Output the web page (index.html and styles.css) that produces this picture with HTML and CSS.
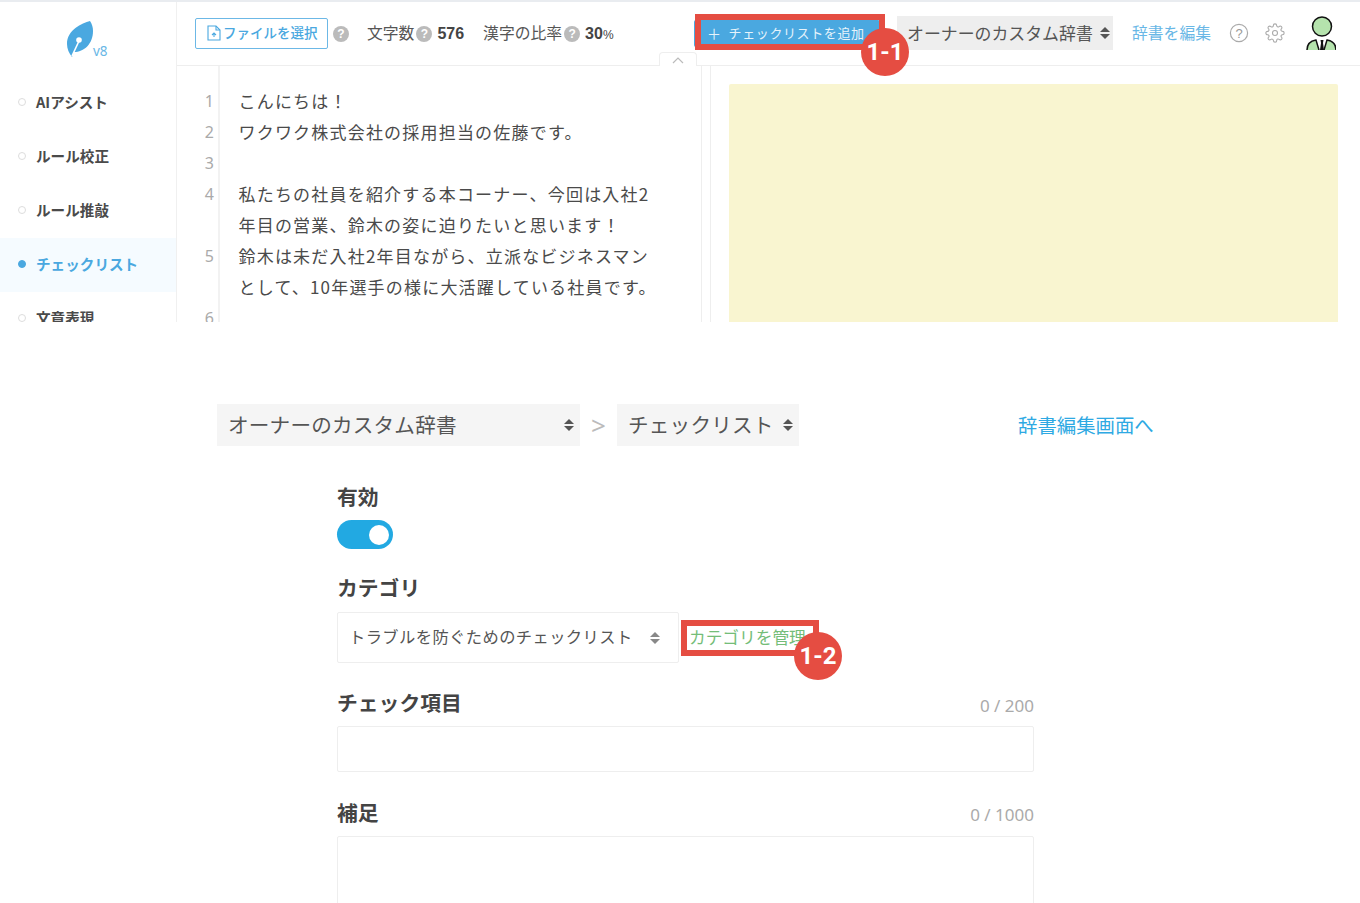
FILE: index.html
```html
<!DOCTYPE html>
<html lang="ja">
<head>
<meta charset="utf-8">
<title>チェックリスト</title>
<link rel="stylesheet" href="styles.css">
</head>
<body>
<section class="app">
  <aside class="sidebar">
    <div class="logo">
      <svg width="30" height="38" viewBox="0 0 30 38"><path d="M24 1C16 3 1 10 1 24c0 5 2 9 5 13l2-5C18 32 27 24 27 11c0-4-1-7-3-10Z" fill="#4aa8e0"/><path d="M6 36 13 21" stroke="#fff" stroke-width="1.600"/><circle cx="13" cy="20" r="2.800" fill="#fff"/></svg>
      <span class="version">v8</span>
    </div>
    <nav>
      <div class="nav-item"><i class="dot"></i>AIアシスト</div>
      <div class="nav-item"><i class="dot"></i>ルール校正</div>
      <div class="nav-item"><i class="dot"></i>ルール推敲</div>
      <div class="nav-item active"><i class="dot"></i>チェックリスト</div>
      <div class="nav-item"><i class="dot"></i>文章表現</div>
    </nav>
  </aside>
  <div class="main">
    <header class="toolbar">
      <button class="file-btn">
        <svg width="14" height="16" viewBox="0 0 14 16" fill="none" stroke="#4aa8e0" stroke-width="1.100"><path d="M1 1h8l4 4v10H1Z"/><path d="M9 1v4h4"/><path d="M7 12V8M5 10l2-2 2 2"/></svg>ファイルを選択
      </button>
      <span class="help first">?</span>
      <span class="stat-label">文字数</span><span class="help">?</span><b class="stat-num">576</b>
      <span class="stat-label second">漢字の比率</span><span class="help">?</span><b class="stat-num">30<small>%</small></b>
      <button class="add-btn"><span class="plus">＋</span>チェックリストを追加</button>
      <div class="dict-select">オーナーのカスタム辞書<span class="updown"></span></div>
      <a class="edit-link">辞書を編集</a>
      <svg class="tool-icon q" width="20" height="20" viewBox="0 0 20 20"><circle cx="10" cy="10" r="8.600" fill="none" stroke="#aaa" stroke-width="1.200"/><text x="10" y="14.600" text-anchor="middle" class="q-text">?</text></svg>
      <svg class="tool-icon gear" width="20" height="20" viewBox="0 0 24 24" fill="none" stroke="#aaa" stroke-width="1.300"><circle cx="12" cy="12" r="3"/><path d="M19.400 15a1.650 1.650 0 0 0 .33 1.820l.06.06a2 2 0 0 1 0 2.830 2 2 0 0 1-2.830 0l-.06-.06a1.650 1.650 0 0 0-1.820-.33 1.650 1.650 0 0 0-1 1.510V21a2 2 0 0 1-2 2 2 2 0 0 1-2-2v-.09A1.650 1.650 0 0 0 9 19.400a1.650 1.650 0 0 0-1.820.33l-.06.06a2 2 0 0 1-2.830 0 2 2 0 0 1 0-2.830l.06-.06a1.650 1.650 0 0 0 .33-1.820 1.650 1.650 0 0 0-1.510-1H3a2 2 0 0 1-2-2 2 2 0 0 1 2-2h.09A1.650 1.650 0 0 0 4.600 9a1.650 1.650 0 0 0-.33-1.820l-.06-.06a2 2 0 0 1 0-2.830 2 2 0 0 1 2.830 0l.06.06a1.650 1.650 0 0 0 1.820.33H9a1.650 1.650 0 0 0 1-1.510V3a2 2 0 0 1 2-2 2 2 0 0 1 2 2v.09a1.650 1.650 0 0 0 1 1.510 1.650 1.650 0 0 0 1.820-.33l.06-.06a2 2 0 0 1 2.830 0 2 2 0 0 1 0 2.830l-.06.06a1.650 1.650 0 0 0-.33 1.820V9a1.650 1.650 0 0 0 1.510 1H21a2 2 0 0 1 2 2 2 2 0 0 1-2 2h-.09a1.650 1.650 0 0 0-1.510 1z"/></svg>
      <svg class="avatar" width="30" height="34" viewBox="0 0 30 34"><circle cx="16" cy="10.500" r="9.500" fill="#b5e3ad" stroke="#111" stroke-width="1.500"/><path d="M1 34c0-6 3-9 9-10l3 10Zm29 0c0-6-3-9-9-10l-3 10Z" fill="#b5e3ad"/><path d="M1 34c0-6 3-9 9-10l3 10M30 34c0-6-3-9-9-10l-3 10" fill="none" stroke="#111" stroke-width="1.500"/><path d="M14.500 24h3l-.5 3 1 7h-4l1-7Z" fill="#111"/></svg>
      <span class="collapse-tab"><svg width="12" height="7" viewBox="0 0 12 7" fill="none" stroke="#bbb" stroke-width="1.200"><path d="M1 6l5-5 5 5"/></svg></span>
      <span class="mark mark-one"></span>
      <span class="badge badge-one">1-1</span>
    </header>
    <div class="workspace">
      <div class="editor">
        <div class="gutter">
          <div>1</div><div>2</div><div>3</div><div>4</div><div></div><div>5</div><div></div><div>6</div>
        </div>
        <div class="text">
          <p>こんにちは！</p>
          <p>ワクワク株式会社の採用担当の佐藤です。</p>
          <p>&nbsp;</p>
          <p>私たちの社員を紹介する本コーナー、今回は入社2</p>
          <p>年目の営業、鈴木の姿に迫りたいと思います！</p>
          <p>鈴木は未だ入社2年目ながら、立派なビジネスマン</p>
          <p>として、10年選手の様に大活躍している社員です。</p>
        </div>
      </div>
      <div class="results"><div class="yellow"></div></div>
    </div>
  </div>
</section>

<section class="dialog">
  <div class="crumbs">
    <div class="big-select wide">オーナーのカスタム辞書<span class="updown"></span></div>
    <span class="gt">&gt;</span>
    <div class="big-select narrow">チェックリスト<span class="updown"></span></div>
    <a class="to-editor">辞書編集画面へ</a>
  </div>
  <form class="form">
    <div class="label first-label">有効</div>
    <div class="toggle"><i></i></div>
    <div class="label cat-label">カテゴリ</div>
    <div class="cat-row">
      <div class="cat-select">トラブルを防ぐためのチェックリスト<span class="updown pale"></span></div>
      <a class="cat-link">カテゴリを管理<span class="mark mark-two"></span><span class="badge badge-two">1-2</span></a>
    </div>
    <div class="label-row item-row"><span class="label">チェック項目</span><span class="count">0 / 200</span></div>
    <div class="input"></div>
    <div class="label-row note-row"><span class="label note-label">補足</span><span class="count">0 / 1000</span></div>
    <div class="input area"></div>
  </form>
</section>
</body>
</html>
```
FILE: styles.css
```css
* { box-sizing: border-box; }
html, body { margin: 0; height: 903px; overflow: hidden; background: #fff; }
body { font-family: "Noto Sans CJK JP", "Noto Sans", sans-serif; color: #4a4a4a; }
p { margin: 0; }
a { color: #4aa8e0; }
button { font-family: inherit; }

.app { display: flex; height: 322px; overflow: hidden; border-top: 2px solid #e9ecf0; }

.sidebar { width: 177px; flex: none; border-right: 1px solid #f0f0f0; }
.logo { display: flex; height: 74px; padding: 18px 0 0 66px; align-items: flex-start; }
.version { margin: 22px 0 0 -3px; font: 13.500px "Noto Sans", sans-serif; color: #69b7e6; }
.nav-item { display: flex; align-items: center; height: 54px; padding: 0 0 4px 18px; font-size: 14.600px; font-weight: 700; color: #4a4a4a; }
.nav-item.active { background: #f5fbff; color: #4aa8e0; }
.dot { width: 8px; height: 8px; margin: 2px 10px 0 0; border: 1px solid #ddd; border-radius: 50%; }
.active .dot { background: #4aa8e0; border-color: #4aa8e0; }

.main { flex: 1; min-width: 0; }

.toolbar { position: relative; display: flex; align-items: center; height: 64px; padding: 0 24px 1px 18px; border-bottom: 1px solid #eee; font-size: 15.800px; }
.file-btn { display: flex; align-items: center; gap: 2px; width: 133px; height: 31px; padding: 0 0 2px 11px; background: #fff; border: 1px solid #6cb8e6; border-radius: 2px; color: #4aa8e0; font-size: 13.500px; font-weight: 500; }
.file-btn svg { margin-top: 2px; }
.help { display: inline-flex; width: 16px; height: 16px; margin-top: 1px; align-items: center; justify-content: center; border-radius: 50%; background: #bbb; color: #fff; font: 700 12px "Liberation Sans", sans-serif; }
.help.first { margin: 1px 18px 0 5px; }
.stat-label { margin-right: 2px; padding-bottom: 2px; color: #555; }
.stat-label.second { margin-left: 19px; }
.stat-num { margin: 1px 0 0 4px; padding-left: 1px; font: 700 16px "Liberation Sans", sans-serif; color: #444; }
.stat-num small { font-size: 12px; font-weight: 400; }
.add-btn { display: flex; align-items: center; width: 186px; height: 27px; margin-left: auto; padding: 0 0 1px 13px; background: #4aa8e0; border: 0; border-radius: 2px; color: #e6f3fb; font-size: 13px; letter-spacing: .6px; }
.plus { margin-right: 7px; font-size: 14px; }
.dict-select { display: flex; align-items: center; width: 216px; height: 34px; margin-left: 17px; padding: 0 0 2px 10px; background: #eee; font-size: 16.900px; color: #555; }
.updown { position: relative; display: inline-block; width: 10px; height: 12px; margin-left: auto; }
.updown::before, .updown::after { content: ""; position: absolute; left: 0; border-left: 5px solid transparent; border-right: 5px solid transparent; }
.updown::before { top: 0; border-bottom: 5px solid #555; }
.updown::after { bottom: 0; border-top: 5px solid #555; }
.pale::before { border-bottom-color: #888; }
.pale::after { border-top-color: #888; }
.dict-select .updown { margin-right: 3px; margin-top: 2px; }
.edit-link { margin-left: 19px; padding-bottom: 2px; font-size: 15.800px; color: #69b7e6; white-space: nowrap; }
.tool-icon.q { margin-left: 18px; }
.tool-icon.gear { margin-left: 16px; }
.q-text { font: 13px "Liberation Sans", sans-serif; fill: #999; }
.avatar { margin-left: 21px; }
.collapse-tab { position: absolute; left: 482px; top: 50px; display: flex; justify-content: center; width: 38px; height: 14px; padding-top: 4px; background: #fff; border: 1px solid #eee; border-bottom: 0; border-radius: 4px 4px 0 0; }

.mark { position: absolute; border: 6px solid #e54d42; }
.mark-one { left: 518px; top: 12px; width: 190px; height: 36px; }
.badge { position: absolute; display: flex; align-items: center; justify-content: center; width: 48px; height: 48px; border-radius: 50%; background: #e54d42; color: #fff; font: 700 24px Roboto, sans-serif; }
.badge-one { left: 684px; top: 26px; }

.workspace { display: flex; height: 256px; }
.editor { display: flex; width: 525px; height: 256px; border-right: 1px solid #eee; }
.gutter { width: 43px; padding: 20px 4px 0 0; border-right: 2px solid #f2f2f2; text-align: right; font: 16px/31px "Noto Sans", sans-serif; color: #aaa; }
.gutter div { height: 31px; }
.text { padding: 19px 0 0 18.500px; font-size: 17px; line-height: 31px; letter-spacing: 1.200px; color: #4a4a4a; white-space: nowrap; }
.results { flex: 1; margin-left: 8px; padding: 18px 22px 0 18px; border-left: 1px solid #eee; }
.yellow { height: 240px; background: #f9f5d0; border-radius: 2px; }

.dialog { height: 581px; padding: 82px 0 0 217px; overflow: hidden; }
.crumbs { display: flex; align-items: center; height: 42px; }
.big-select { display: flex; align-items: center; height: 42px; padding: 0 6px 2px 11px; background: #f5f5f5; font-size: 20.600px; color: #555; letter-spacing: .200px; }
.big-select .updown { margin-top: 2px; }
.wide { width: 363px; }
.narrow { width: 182px; padding-left: 11px; }
.gt { width: 37px; text-align: center; font: 26px "Noto Sans", sans-serif; color: #bbb; }
.to-editor { margin-left: 219px; padding-bottom: 2px; font-size: 19.400px; color: #2ea9e3; white-space: nowrap; }

.form { width: 697px; margin-left: 120px; }
.label { padding-bottom: 2px; font-size: 20.800px; font-weight: 700; color: #444; line-height: 26px; }
.note-label { padding-bottom: 0; line-height: 28px; }
.first-label { margin-top: 37px; }
.toggle { display: flex; justify-content: flex-end; align-items: center; width: 56px; height: 29px; margin-top: 9px; padding-right: 4px; background: #22a9e2; border-radius: 15px; }
.toggle i { width: 20px; height: 20px; border-radius: 50%; background: #fff; }
.cat-label { margin-top: 25px; }
.cat-row { display: flex; align-items: center; margin-top: 10px; }
.cat-select { display: flex; align-items: center; width: 342px; height: 51px; padding: 0 18px 3px 11px; border: 1px solid #eee; border-radius: 2px; font-size: 16.300px; color: #555; letter-spacing: .400px; }
.cat-select .updown { margin-top: 3px; }
.cat-link { position: relative; margin-left: 10px; padding-bottom: 2px; font-size: 16.700px; color: #74bd78; white-space: nowrap; }
.mark-two { left: -8px; top: -5px; width: 138px; height: 36px; }
.badge-two { left: 105px; top: 7px; }
.label-row { display: flex; justify-content: space-between; align-items: flex-end; }
.item-row { margin-top: 26px; }
.note-row { margin-top: 26px; }
.count { font: 17px "Noto Sans", sans-serif; color: #aaa; }
.input { height: 46px; margin-top: 9px; border: 1px solid #eee; border-radius: 2px; }
.note-row + .input { margin-top: 10px; }
.area { height: 90px; }
```
